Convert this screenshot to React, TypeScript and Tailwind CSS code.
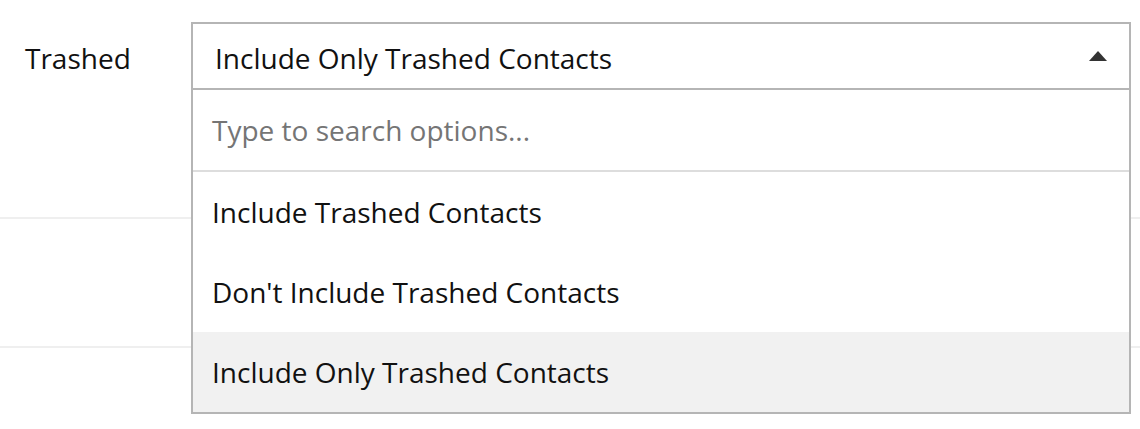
import React from "react";

export default function App() {
  const options = [
    "Include Trashed Contacts",
    "Don't Include Trashed Contacts",
    "Include Only Trashed Contacts",
  ];
  return (
    <div
      className="relative w-[1140px] h-[429px] bg-white text-[#111] overflow-hidden"
      style={{ fontFamily: '"Open Sans", "Noto Sans", sans-serif' }}
    >
      <div className="flex h-[219px] border-b-2 border-[#efefef]">
        <div className="w-[191px] pl-[25px] pt-[22px]">
          <div className="h-[68px] pt-[4px] flex items-center text-[28px] leading-[38px]">Trashed</div>
        </div>
        <div className="relative w-[940px] pt-[22px]">
          <div className="h-[68px] border-2 border-[#b5b5b5] bg-white flex items-center justify-between pl-[22px] pr-[22px]">
            <span className="text-[28px] leading-[38px] pt-[3px]">Include Only Trashed Contacts</span>
            <svg width="18" height="10" viewBox="0 0 18 10">
              <polygon points="9,0 18,10 0,10" fill="#333" />
            </svg>
          </div>
          <div className="absolute left-0 right-0 top-[90px] z-10 border-x-2 border-b-2 border-[#b5b5b5] bg-white">
            <div className="h-[82px] border-b-2 border-[#dddddd] flex items-center pl-[19px] text-[28px] leading-[38px] text-[#757575]">
              Type to search options...
            </div>
            {options.map((o, i) => (
              <div
                key={o}
                className={
                  i === 2
                    ? "h-[80px] flex items-center pl-[19px] text-[28px] leading-[38px] bg-[#f1f1f1]"
                    : "h-[80px] flex items-center pl-[19px] text-[28px] leading-[38px]"
                }
              >
                {o}
              </div>
            ))}
          </div>
        </div>
      </div>
      <div className="h-[129px] border-b-2 border-[#efefef]"></div>
    </div>
  );
}
